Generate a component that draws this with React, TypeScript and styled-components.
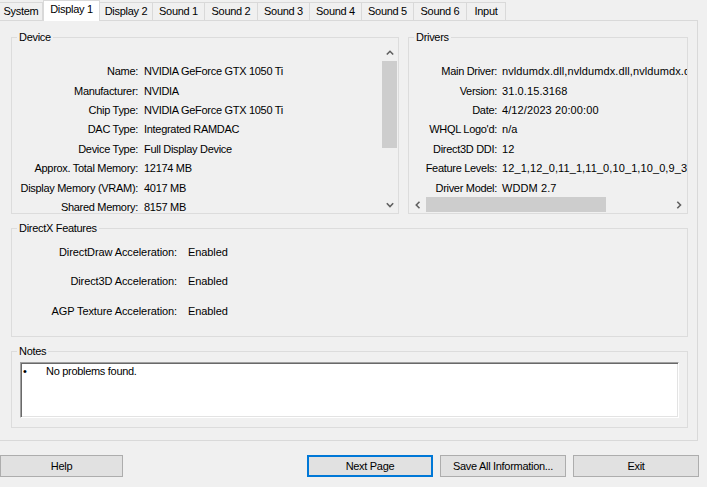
import React from "react";
import styled, { createGlobalStyle, css } from "styled-components";

const GlobalStyle = createGlobalStyle`
  html, body { margin: 0; padding: 0; background: #f0f0f0; }
  body { font-family: "Liberation Sans", Arial, sans-serif; font-size: 11px; color: #000; }
  * { box-sizing: border-box; }
`;

const Window = styled.div`
  width: 707px;
  height: 487px;
  overflow: hidden;
  background: #f0f0f0;
  display: flex;
  flex-direction: column;
  font-family: "Liberation Sans", Arial, sans-serif;
  font-size: 11px;
  letter-spacing: -0.3px;
  color: #000;
`;

const TabStrip = styled.div`
  display: flex;
  align-items: flex-end;
  height: 20px;
`;

const Tab = styled.div<{ $w: number; $active?: boolean }>`
  width: ${(p) => p.$w}px;
  height: ${(p) => (p.$active ? 21 : 18)}px;
  margin-bottom: ${(p) => (p.$active ? -1 : 0)}px;
  position: relative;
  z-index: ${(p) => (p.$active ? 2 : 0)};
  background: ${(p) => (p.$active ? "#ffffff" : "#f0f0f0")};
  border-top: 1px solid #d9d9d9;
  border-right: 1px solid #d9d9d9;
  border-left: ${(p) => (p.$active ? "1px solid #d9d9d9" : "none")};
  display: flex;
  align-items: center;
  justify-content: center;
  padding-bottom: ${(p) => (p.$active ? 4 : 1)}px;
  white-space: nowrap;
`;

const Panel = styled.div`
  width: 698px;
  height: 421px;
  border: 1px solid #d9d9d9;
  border-left: none;
  padding: 10px 9px 13px 11px;
  display: flex;
  flex-direction: column;
  gap: 8px;
`;

const TopRow = styled.div`
  display: flex;
  gap: 9px;
`;

const Group = styled.fieldset<{ $w?: number }>`
  margin: 0;
  padding: 1px 0 0 0;
  min-width: 0;
  border: 1px solid #dcdcdc;
  ${(p) =>
    p.$w
      ? css`
          width: ${p.$w}px;
          flex: none;
        `
      : css`
          width: 100%;
        `}
`;

const Legend = styled.legend`
  margin-left: 5px;
  padding: 0 2px;
  line-height: 12px;
  font-size: 11px;
`;

const DeviceBody = styled.div`
  display: flex;
  height: 169px;
`;

const DriversBody = styled.div`
  display: flex;
  flex-direction: column;
  height: 169px;
`;

const InfoGrid = styled.div<{ $label: number; $gap: number; $valueSpacing?: number }>`
  flex: 1;
  min-width: 0;
  overflow: hidden;
  padding-top: 18px;
  display: grid;
  grid-template-columns: ${(p) => p.$label}px max-content;
  grid-auto-rows: 19.4px;
  column-gap: ${(p) => p.$gap}px;
  align-content: start;
  align-items: center;
  line-height: 13px;
  white-space: nowrap;

  & > :nth-child(even) {
    letter-spacing: ${(p) => (p.$valueSpacing ?? -0.3)}px;
  }
`;

const Label = styled.div`
  text-align: right;
`;

const Value = styled.div``;

const VScroll = styled.div`
  width: 17px;
  flex: none;
  display: flex;
  flex-direction: column;
  background: #f0f0f0;
`;

const HScroll = styled.div`
  height: 17px;
  flex: none;
  display: flex;
  background: #f0f0f0;
`;

const Arrow = styled.div`
  width: 17px;
  height: 17px;
  flex: none;
  display: flex;
  align-items: center;
  justify-content: center;
`;

const VTrack = styled.div`
  flex: 1;
  padding: 0 1px;
`;

const HTrack = styled.div`
  flex: 1;
  padding: 1px 0;
`;

const VThumb = styled.div<{ $h: number }>`
  height: ${(p) => p.$h}px;
  background: #cdcdcd;
`;

const HThumb = styled.div<{ $w: number }>`
  width: ${(p) => p.$w}px;
  height: 15px;
  background: #cdcdcd;
`;

const FeatureGrid = styled.div`
  height: 101px;
  padding-top: 7px;
  display: grid;
  grid-template-columns: 165px max-content;
  grid-auto-rows: 20px;
  row-gap: 9.5px;
  column-gap: 11px;
  align-content: start;
  align-items: center;
  line-height: 13px;
  letter-spacing: -0.1px;
`;

const NotesBody = styled.div`
  padding: 4px 8px 9px 8px;
`;

const NotesBox = styled.div`
  height: 56px;
  background: #ffffff;
  border: 1px solid;
  border-color: #a0a0a0 #ffffff #ffffff #a0a0a0;
  box-shadow: inset 1px 1px 0 #696969, inset -1px -1px 0 #e3e3e3;
  padding: 2px 0 0 2px;
  display: flex;
  line-height: 13px;
`;

const Bullet = styled.span`
  width: 23px;
  flex: none;
`;

const ButtonRow = styled.div`
  margin-top: 14px;
  width: 699px;
  display: flex;
  gap: 7px;
`;

const Button = styled.button<{ $w: number; $default?: boolean; $push?: boolean }>`
  width: ${(p) => p.$w}px;
  height: 22px;
  margin: 0;
  ${(p) => p.$push && "margin-left: auto;"}
  padding: 0;
  background: #e1e1e1;
  border: 1px solid ${(p) => (p.$default ? "#0078d7" : "#adadad")};
  ${(p) => p.$default && "box-shadow: inset 0 0 0 1px #0078d7;"}
  font-family: "Liberation Sans", Arial, sans-serif;
  font-size: 11px;
  letter-spacing: -0.3px;
  color: #000;
  border-radius: 0;
`;

const Chevron = ({ dir }: { dir: "up" | "down" | "left" | "right" }) => {
  if (dir === "up" || dir === "down") {
    const pts = dir === "up" ? "0.8,4.5 4,1.3 7.2,4.5" : "0.8,1.3 4,4.5 7.2,1.3";
    return (
      <svg width="8" height="6" viewBox="0 0 8 6">
        <polyline points={pts} fill="none" stroke="#606060" strokeWidth="1.6" />
      </svg>
    );
  }
  const hp = dir === "left" ? "4.5,0.8 1.3,4 4.5,7.2" : "1.3,0.8 4.5,4 1.3,7.2";
  return (
    <svg width="6" height="8" viewBox="0 0 6 8">
      <polyline points={hp} fill="none" stroke="#606060" strokeWidth="1.6" />
    </svg>
  );
};

const tabs: [string, number][] = [
  ["System", 43],
  ["Display 1", 57],
  ["Display 2", 53],
  ["Sound 1", 52],
  ["Sound 2", 53],
  ["Sound 3", 52],
  ["Sound 4", 52],
  ["Sound 5", 52],
  ["Sound 6", 53],
  ["Input", 39],
];

const deviceRows: [string, string][] = [
  ["Name:", "NVIDIA GeForce GTX 1050 Ti"],
  ["Manufacturer:", "NVIDIA"],
  ["Chip Type:", "NVIDIA GeForce GTX 1050 Ti"],
  ["DAC Type:", "Integrated RAMDAC"],
  ["Device Type:", "Full Display Device"],
  ["Approx. Total Memory:", "12174 MB"],
  ["Display Memory (VRAM):", "4017 MB"],
  ["Shared Memory:", "8157 MB"],
];

const driverRows: [string, string][] = [
  ["Main Driver:", "nvldumdx.dll,nvldumdx.dll,nvldumdx.dll,nvldumdx.dll"],
  ["Version:", "31.0.15.3168"],
  ["Date:", "4/12/2023 20:00:00"],
  ["WHQL Logo'd:", "n/a"],
  ["Direct3D DDI:", "12"],
  ["Feature Levels:", "12_1,12_0,11_1,11_0,10_1,10_0,9_3,9_2,9_1"],
  ["Driver Model:", "WDDM 2.7"],
];

const features: [string, string][] = [
  ["DirectDraw Acceleration:", "Enabled"],
  ["Direct3D Acceleration:", "Enabled"],
  ["AGP Texture Acceleration:", "Enabled"],
];

export default function App() {
  return (
    <>
      <GlobalStyle />
      <Window>
        <TabStrip>
          {tabs.map(([name, w]) => (
            <Tab key={name} $w={w} $active={name === "Display 1"}>
              {name}
            </Tab>
          ))}
        </TabStrip>
        <Panel>
          <TopRow>
            <Group $w={388}>
              <Legend>Device</Legend>
              <DeviceBody>
                <InfoGrid $label={126} $gap={6}>
                  {deviceRows.map(([l, v]) => (
                    <React.Fragment key={l}>
                      <Label>{l}</Label>
                      <Value>{v}</Value>
                    </React.Fragment>
                  ))}
                </InfoGrid>
                <VScroll>
                  <Arrow>
                    <Chevron dir="up" />
                  </Arrow>
                  <VTrack>
                    <VThumb $h={87} />
                  </VTrack>
                  <Arrow>
                    <Chevron dir="down" />
                  </Arrow>
                </VScroll>
              </DeviceBody>
            </Group>
            <Group $w={280}>
              <Legend>Drivers</Legend>
              <DriversBody>
                <InfoGrid $label={88} $gap={5} $valueSpacing={0.1}>
                  {driverRows.map(([l, v]) => (
                    <React.Fragment key={l}>
                      <Label>{l}</Label>
                      <Value>{v}</Value>
                    </React.Fragment>
                  ))}
                </InfoGrid>
                <HScroll>
                  <Arrow>
                    <Chevron dir="left" />
                  </Arrow>
                  <HTrack>
                    <HThumb $w={180} />
                  </HTrack>
                  <Arrow>
                    <Chevron dir="right" />
                  </Arrow>
                </HScroll>
              </DriversBody>
            </Group>
          </TopRow>
          <Group>
            <Legend>DirectX Features</Legend>
            <FeatureGrid>
              {features.map(([l, v]) => (
                <React.Fragment key={l}>
                  <Label>{l}</Label>
                  <Value>{v}</Value>
                </React.Fragment>
              ))}
            </FeatureGrid>
          </Group>
          <Group>
            <Legend>Notes</Legend>
            <NotesBody>
              <NotesBox>
                <Bullet>•</Bullet>
                <span>No problems found.</span>
              </NotesBox>
            </NotesBody>
          </Group>
        </Panel>
        <ButtonRow>
          <Button $w={123}>Help</Button>
          <Button $w={126} $default $push>
            Next Page
          </Button>
          <Button $w={126}>Save All Information...</Button>
          <Button $w={126}>Exit</Button>
        </ButtonRow>
      </Window>
    </>
  );
}
